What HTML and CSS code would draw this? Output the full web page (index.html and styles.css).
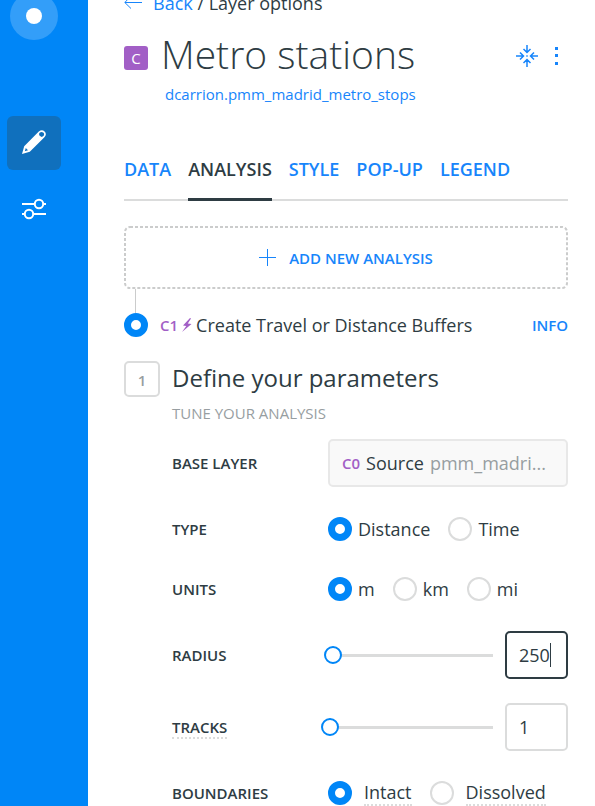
FILE: index.html
```html
<!DOCTYPE html>
<html lang="en">
<head>
<meta charset="utf-8">
<title>Layer options</title>
<link rel="stylesheet" href="styles.css">
</head>
<body>
<div class="app">
  <nav class="sidebar" aria-label="Builder">
    <a class="brand" href="#" aria-label="Home"><span class="brand-dot"></span></a>
    <button class="side-button side-button-active" type="button" aria-label="Edit">
      <svg width="26" height="28" viewBox="0 0 26 28"><path fill="#fff" fill-rule="evenodd" d="M1 25 L3.2 17.2 L17.8 2.6 Q20.8 -.2 23.6 2.4 Q26.2 5.2 23.4 8.2 L8.8 22.8 Z M18.9 3.6 Q17.2 5.4 19 7.1 Q20.8 8.7 22.4 7.1 Q23.9 5.2 22.2 3.6 Q20.5 2.2 18.9 3.6 Z M4.8 19 L3.8 22.2 L7 21.2 Z"/></svg>
    </button>
    <button class="side-button" type="button" aria-label="Settings">
      <svg width="26" height="22" viewBox="0 0 26 22" fill="none" stroke="#fff" stroke-width="2"><path d="M1 6h12M22 6h3M1 16h3M13 16h12"/><circle cx="18" cy="6" r="4.2"/><circle cx="8" cy="16" r="4.2"/></svg>
    </button>
  </nav>
  <main class="panel">
    <div class="crumbs">
      <svg width="18" height="14" viewBox="0 0 18 14" fill="none" stroke="#1785fb" stroke-width="1"><path d="M18 6.500H1M7 0L.8 6.500L7 12.500"/></svg>
      <span><a href="#">Back</a> / Layer options</span>
    </div>
    <header class="head">
      <span class="badge">C</span>
      <h1 class="title">Metro stations</h1>
      <div class="actions">
        <button class="icon-button" type="button" aria-label="Center map on layer">
          <svg width="24" height="24" viewBox="0 0 24 24" fill="none" stroke="#1785fb" stroke-width="1.500"><path d="M12 1v7M8.500 5L12 8.500L15.500 5M12 23v-7M8.500 19L12 15.500L15.500 19M1 12h7M5 8.500L8.500 12L5 15.500M23 12h-7M19 8.500L15.500 12L19 15.500"/><path d="M11.300 12h1.400"/></svg>
        </button>
        <button class="icon-button" type="button" aria-label="More options">
          <svg width="4" height="18" viewBox="0 0 4 18" fill="#1785fb"><path d="M0 0h3v3H0zM0 7h3v3H0zM0 15h3v3H0z"/></svg>
        </button>
      </div>
      <a class="source-link" href="#">dcarrion.pmm_madrid_metro_stops</a>
    </header>
    <nav class="tabs" aria-label="Layer">
      <a class="tab" href="#">DATA</a>
      <a class="tab tab-active" href="#" aria-current="page">ANALYSIS</a>
      <a class="tab" href="#">STYLE</a>
      <a class="tab" href="#">POP-UP</a>
      <a class="tab" href="#">LEGEND</a>
    </nav>
    <button class="add" type="button">
      <svg class="add-outline" width="100%" height="100%" fill="none" stroke="#cbcccc" stroke-width="2" stroke-dasharray="3 2" aria-hidden="true"><rect class="add-rect" x="1" y="1" rx="5"/></svg>
      <svg width="18" height="18" viewBox="0 0 18 18" stroke="#1785fb"><path d="M8.500 0v17M0 8.500h17"/></svg>
      ADD NEW ANALYSIS
    </button>
    <div class="connector"></div>
    <div class="node">
      <input class="radio" type="radio" name="node" id="node" aria-label="C1" checked>
      <label class="node-label" for="node">
        <span class="node-id">C1</span>
        <svg width="10" height="14" viewBox="0 0 10 14" fill="#a25fc6"><path d="M8 0L1 7.500L4.300 8L0 14L9.500 6L5.800 5.500L9 0.500Z"/></svg>
        <span class="node-name">Create Travel or Distance Buffers</span>
      </label>
      <a class="info" href="#">INFO</a>
    </div>
    <section class="step">
      <span class="step-number">1</span>
      <div class="step-body">
        <h2 class="step-title">Define your parameters</h2>
        <p class="step-note">TUNE YOUR ANALYSIS</p>
        <form class="form">
          <div class="row">
            <span class="label" id="base">BASE LAYER</span>
            <button class="source" type="button" aria-labelledby="base" disabled><span class="source-id">C0</span><span>Source</span><span class="source-name">pmm_madri...</span></button>
          </div>
          <div class="row row-radio" role="radiogroup" aria-label="Type">
            <span class="label">TYPE</span>
            <div class="options">
              <label class="option"><input class="radio" type="radio" name="type" checked>Distance</label>
              <label class="option"><input class="radio" type="radio" name="type">Time</label>
            </div>
          </div>
          <div class="row row-radio" role="radiogroup" aria-label="Units">
            <span class="label">UNITS</span>
            <div class="options">
              <label class="option"><input class="radio" type="radio" name="units" checked>m</label>
              <label class="option"><input class="radio" type="radio" name="units">km</label>
              <label class="option"><input class="radio" type="radio" name="units">mi</label>
            </div>
          </div>
          <div class="row">
            <label class="label" for="radius">RADIUS</label>
            <div class="slider">
              <input class="range" type="range" min="0" max="100" value="2" aria-label="Radius slider">
              <span class="field"><input class="number number-focus" id="radius" type="text" value="250"><span class="caret"></span></span>
            </div>
          </div>
          <div class="row">
            <label class="label" for="tracks"><span class="hint">TRACKS</span></label>
            <div class="slider">
              <input class="range" type="range" min="1" max="10" value="1" aria-label="Tracks slider">
              <span class="field"><input class="number" id="tracks" type="text" value="1"></span>
            </div>
          </div>
          <div class="row row-radio" role="radiogroup" aria-label="Boundaries">
            <span class="label">BOUNDARIES</span>
            <div class="options">
              <label class="option option-wide"><input class="radio" type="radio" name="bounds" checked><span class="hint">Intact</span></label>
              <label class="option option-wide"><input class="radio" type="radio" name="bounds"><span class="hint">Dissolved</span></label>
            </div>
          </div>
        </form>
      </div>
    </section>
  </main>
</div>
</body>
</html>
```
FILE: styles.css
```css
* { box-sizing: border-box; }
html, body { height: 100%; }
body {
  margin: 0;
  overflow: hidden;
  background: #fff;
  color: #2e3c43;
  font: 18px/24px "Open Sans", sans-serif;
}
a { color: #1785fb; text-decoration: none; }
button, input { font: inherit; color: inherit; }
button { padding: 0; border: 0; background: none; }
h1, h2, p { margin: 0; }
svg { display: block; flex: none; }

.app { display: flex; height: 100%; }

.sidebar {
  flex: none;
  display: flex;
  flex-direction: column;
  align-items: center;
  width: 88px;
  padding-right: 20px;
  background: #0086f7;
}
.brand {
  flex: none;
  display: grid;
  place-items: center;
  width: 48px;
  height: 48px;
  margin: -8px 0 76px;
  border-radius: 50%;
  background: #339ef9;
}
.brand-dot { width: 16px; height: 16px; border-radius: 50%; background: #fff; }
.side-button {
  flex: none;
  display: grid;
  place-items: center;
  width: 54px;
  height: 54px;
  margin-bottom: 12px;
  border-radius: 6px;
}
.side-button-active { background: #1070bd; }

.panel { flex: 1; min-width: 0; margin-top: -9px; padding: 0 27px 0 36px; }
.crumbs { display: flex; align-items: center; gap: 11px; height: 24px; }

.head {
  display: grid;
  grid-template-columns: 24px 1fr auto;
  column-gap: 13px;
  align-items: center;
  padding-top: 13px;
}
.badge {
  width: 24px;
  height: 24px;
  margin-top: 8px;
  border-radius: 3px;
  background: #a25fc6;
  color: #fff;
  font-size: 15px;
  text-align: center;
}
.title { font-size: 39px; font-weight: 300; line-height: 52px; }
.actions { display: flex; align-items: center; gap: 16px; padding: 4px 9px 0 0; }
.source-link { grid-column: 2 / -1; padding: 2px 0 0 4px; font-size: 15px; }

.tabs { display: flex; gap: 17px; margin-top: 51px; border-bottom: 2px solid #dbdcdc; }
.tab { font-weight: 600; white-space: nowrap; }
.tab-active { height: 44px; margin-bottom: -2px; color: #2e3c43; border-bottom: 3px solid #2e3c43; }

.add {
  position: relative;
  display: flex;
  align-items: center;
  justify-content: center;
  gap: 12px;
  width: 100%;
  height: 63px;
  margin-top: 25px;
  color: #1785fb;
  font-size: 15px;
  font-weight: 600;
}
.add-outline { position: absolute; inset: 0; }
.add-rect { width: calc(100% - 2px); height: calc(100% - 2px); }
.connector { width: 1px; height: 24px; margin-left: 11px; background: #cbcccc; }

.node { display: flex; align-items: center; gap: 12px; height: 24px; }
.node-label { flex: 1; display: flex; align-items: center; gap: 4px; white-space: nowrap; }
.node-id { color: #a25fc6; font-size: 15px; font-weight: 600; }
.info { font-size: 15px; font-weight: 600; }

.radio {
  appearance: none;
  flex: none;
  width: 24px;
  height: 24px;
  margin: 0;
  border: 2px solid #dbdcdc;
  border-radius: 50%;
  background: #fff;
}
.radio:checked { border: 7px solid #0086f7; }

.step { display: flex; gap: 12px; margin-top: 24px; }
.step-number {
  flex: none;
  width: 36px;
  height: 36px;
  border: 2px solid #dbdcdc;
  border-radius: 5px;
  color: #979ea1;
  font-size: 15px;
  font-weight: 600;
  line-height: 34px;
  text-align: center;
}
.step-body { flex: 1; min-width: 0; }
.step-title { font-size: 24px; font-weight: 400; line-height: 34px; }
.step-note { margin-top: 6px; color: #979ea1; font-size: 15px; }

.form { display: grid; gap: 24px; margin-top: 14px; }
.row { display: grid; grid-template-columns: 156px 1fr; align-items: center; height: 48px; }
.row-radio { height: 36px; }
.label { font-size: 15px; font-weight: 600; line-height: 18px; }
.hint { border-bottom: 2px dotted #dbdcdc; }
.source {
  display: flex;
  align-items: center;
  gap: 6px;
  min-width: 0;
  height: 48px;
  padding: 0 12px;
  border: 2px solid #e8e8e8;
  border-radius: 5px;
  background: #f9f9f9;
  color: #2e3c43;
}
.source-id { color: #a25fc6; font-size: 15px; font-weight: 600; }
.source-name { overflow: hidden; color: #979ea1; text-overflow: ellipsis; white-space: nowrap; }

.options { display: flex; gap: 18px; }
.option { display: flex; align-items: center; gap: 6px; }
.option-wide { gap: 12px; }

.slider { display: flex; align-items: center; gap: 12px; }
.range {
  appearance: none;
  flex: 1;
  min-width: 0;
  height: 18px;
  margin: 0 -9px 0 -7px;
  background: linear-gradient(#dbdcdc, #dbdcdc) center / calc(100% - 18px) 3px no-repeat;
}
.range::-webkit-slider-thumb {
  appearance: none;
  width: 18px;
  height: 18px;
  border: 2px solid #0086f7;
  border-radius: 50%;
  background: #fff;
}
.field { position: relative; flex: none; width: 63px; }
.number {
  display: block;
  width: 100%;
  height: 48px;
  padding: 0 12px;
  border: 2px solid #dbdcdc;
  border-radius: 5px;
  background: #fff;
}
.number-focus { border-color: #2e3c43; }
.caret { position: absolute; top: 12px; left: 45px; width: 1px; height: 24px; background: #2e3c43; }
```
